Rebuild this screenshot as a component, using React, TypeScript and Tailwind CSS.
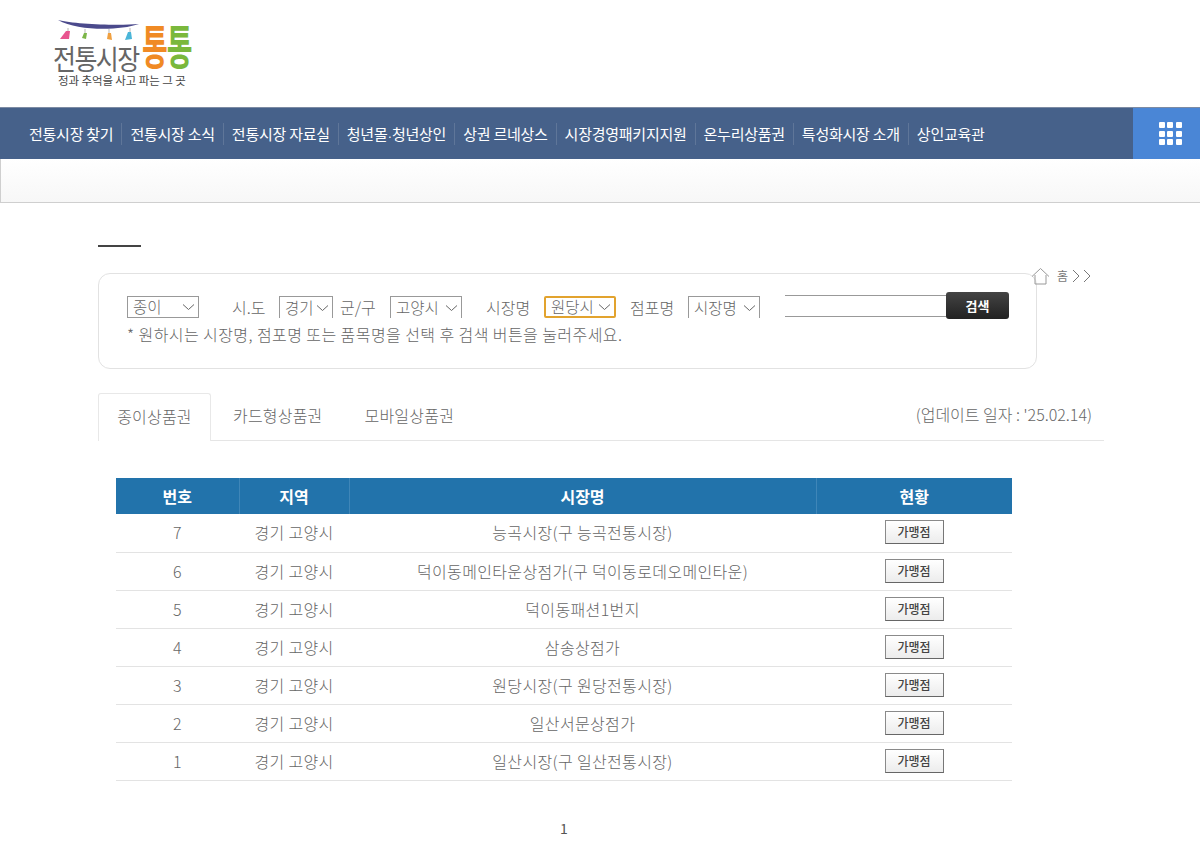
const font = "font-['Noto_Sans_CJK_KR','Noto_Sans',sans-serif]";

const menus = [
  "전통시장 찾기",
  "전통시장 소식",
  "전통시장 자료실",
  "청년몰·청년상인",
  "상권 르네상스",
  "시장경영패키지지원",
  "온누리상품권",
  "특성화시장 소개",
  "상인교육관",
];

const rows = [
  { no: 7, name: "능곡시장(구 능곡전통시장)" },
  { no: 6, name: "덕이동메인타운상점가(구 덕이동로데오메인타운)" },
  { no: 5, name: "덕이동패션1번지" },
  { no: 4, name: "삼송상점가" },
  { no: 3, name: "원당시장(구 원당전통시장)" },
  { no: 2, name: "일산서문상점가" },
  { no: 1, name: "일산시장(구 일산전통시장)" },
];

function Chevron() {
  return (
    <svg width="13" height="8" viewBox="0 0 13 8" fill="none" className="shrink-0">
      <path d="M1 1.500 6.500 6.500 12 1.500" stroke="#666" strokeWidth="1" />
    </svg>
  );
}

function Logo() {
  return (
    <div className="relative h-[107px] w-[300px]">
      <svg width="90" height="24" viewBox="0 0 90 24" className="absolute left-[56px] top-[19px]" fill="none">
        <path d="M2 1C18 5 60 7 83 5 62 12 22 12 2 1Z" fill="#4b4a8c" />
        <path d="M12 9v4M29 10v4M53 10v4M74 9v4" stroke="#999" strokeWidth="0.7" />
        <path d="M10 12 14 12 13 20 4 20Z" fill="#e8558f" />
        <path d="M28 14 31 14 30 20 26 19Z" fill="#7cb548" />
        <path d="M52 14 55 14 56 21 51 20Z" fill="#f0a040" />
        <path d="M72 13 75 13 76 20 69 21Z" fill="#4ab5d8" />
      </svg>
      <div className="absolute left-[53px] top-[43px] origin-top scale-y-[1.12] text-[25px] leading-[26px] tracking-[-1.6px] text-[#666666]">
        전통시장
      </div>
      <div className="absolute left-[142px] top-[17px] flex origin-top scale-y-[1.68] text-[28px] leading-[32px] font-bold tracking-[-1px]">
        <span className="text-[#f08a24]">통</span>
        <span className="text-[#7ab83c]">통</span>
      </div>
      <div className="absolute left-[58px] top-[73px] text-[11.5px] leading-[14px] tracking-[-0.1px] text-[#444444]">
        정과 추억을 사고 파는 그 곳
      </div>
    </div>
  );
}

function Select({ label, w, focus, closed }: { label: string; w: string; focus?: boolean; closed?: boolean }) {
  return (
    <div
      className={`flex h-[22px] shrink-0 items-center justify-between pl-[5px] pr-[3px] text-[15.5px] font-light text-[#666666] ${w} ${
        focus
          ? "rounded-[2px] border-2 border-[#e2a32e]"
          : closed
            ? "border border-[#999999]"
            : "border border-b-0 border-[#999999]"
      }`}
    >
      <span>{label}</span>
      <Chevron />
    </div>
  );
}

export default function App() {
  return (
    <div className={`${font} min-h-[867px] w-[1200px] overflow-hidden bg-white text-[#666666]`}>
      <Logo />

      <nav className="flex h-[52px] items-center justify-between border-t border-[#7d8ba3] bg-[#46618a]">
        <ul className="flex pl-[21px] text-[15px] tracking-[-0.25px] whitespace-nowrap text-white">
          {menus.map((m, i) => (
            <li key={m} className={`h-[22px] px-[8px] leading-[22px] ${i > 0 ? "border-l border-[#5f7699]" : ""}`}>
              {i === 3 ? (
                <>
                  청년몰<span className="text-[8px] leading-none font-bold">·</span>청년상인
                </>
              ) : (
                m
              )}
            </li>
          ))}
        </ul>
        <div className="grid h-full w-[67px] place-items-center bg-[#4a86d6] pl-[7px]">
          <div className="grid grid-cols-3 gap-[2.5px]">
            {Array.from({ length: 9 }).map((_, i) => (
              <span key={i} className="h-[6px] w-[6px] rounded-[1px] bg-white" />
            ))}
          </div>
        </div>
      </nav>

      <div className="h-[44px] border-b border-l border-[#cfcfcf] bg-gradient-to-b from-white to-[#f7f7f7]" />

      <main className="relative pl-[98px]">
        <div className="mt-[42px] h-[2px] w-[43px] bg-[#444444]" />

        <div className="absolute left-[1031px] top-[22px] flex items-center gap-[7px] text-[12px] text-[#777777]">
          <svg width="19" height="18" viewBox="0 0 19 18" fill="none" stroke="#999" strokeWidth="1">
            <path d="M1 9.500 9.500 1.500 18 9.500" />
            <path d="M4 8v9h11V8" />
          </svg>
          <span>홈</span>
          <svg width="20" height="14" viewBox="0 0 20 14" fill="none" stroke="#777" strokeWidth="1" className="-ml-[3px]">
            <path d="M1 1l6 6-6 6M12 1l6 6-6 6" />
          </svg>
        </div>

        <section className="mt-[26px] h-[96px] w-[939px] rounded-[12px] border border-[#e2e2e2] pl-[28px] pt-[21px]">
          <div className="flex h-[24px] items-center text-[16px] font-light whitespace-nowrap text-[#666666]">
            <Select label="종이" w="w-[72px]" closed />
            <span className="ml-[33px] w-[47px] shrink-0">시.도</span>
            <Select label="경기" w="w-[54px]" />
            <span className="ml-[7px] w-[36px] shrink-0">군/구</span>
            <span className="w-[14px] shrink-0" />
            <Select label="고양시" w="w-[72px]" />
            <span className="ml-[24px] w-[43px] shrink-0">시장명</span>
            <span className="w-[15px] shrink-0" />
            <Select label="원당시" w="w-[72px]" focus />
            <span className="ml-[14px] w-[44px] shrink-0">점포명</span>
            <span className="w-[14px] shrink-0" />
            <Select label="시장명" w="w-[72px]" />
            <div className="mb-[3px] ml-[25px] h-[22px] w-[161px] shrink-0 border-y border-[#999999]" />
            <button className="mb-[3px] h-[27px] w-[63px] shrink-0 rounded-[3px] bg-gradient-to-b from-[#444444] to-[#222222] text-[13px] font-bold text-white">
              검색
            </button>
          </div>
          <p className="mt-[4px] text-[16px] leading-[22px] font-light tracking-[0.43px] whitespace-nowrap text-[#666666]">
            * 원하시는 시장명, 점포명 또는 품목명을 선택 후 검색 버튼을 눌러주세요.
          </p>
        </section>

        <div className="mt-[24px] flex h-[48px] w-[1006px] items-stretch border-b border-[#e5e5e5] text-[16px] font-light tracking-[0.2px] text-[#666666]">
          <div className="-mb-px flex w-[113px] items-center justify-center rounded-t-[3px] border border-b-0 border-[#e8e8e8] bg-white pb-[3px]">
            종이상품권
          </div>
          <div className="ml-[22px] flex items-center pb-[3px]">카드형상품권</div>
          <div className="ml-[42px] flex items-center pb-[3px]">모바일상품권</div>
          <div className="ml-auto flex items-center pr-[12px] pb-[5px] tracking-[0px]">(업데이트 일자 : '25.02.14)</div>
        </div>

        <table className="mt-[37px] ml-[18px] w-[896px] table-fixed border-collapse text-center text-[16px] font-light tracking-[0.35px] text-[#666666]">
          <colgroup>
            <col className="w-[123px]" />
            <col className="w-[110px]" />
            <col className="w-[467px]" />
            <col className="w-[196px]" />
          </colgroup>
          <thead>
            <tr className="h-[36px] bg-[#2273ab] text-[16px] font-bold tracking-normal text-white">
              <th className="border-r border-[#3f86b8] pb-[1px]">번호</th>
              <th className="border-r border-[#3f86b8] pb-[1px]">지역</th>
              <th className="border-r border-[#3f86b8] pb-[1px]">시장명</th>
              <th className="pb-[1px]">현황</th>
            </tr>
          </thead>
          <tbody>
            {rows.map((r) => (
              <tr key={r.no} className="h-[38px] border-b border-[#e3e3e3]">
                <td className="pb-[1px]">{r.no}</td>
                <td className="pb-[1px]">경기 고양시</td>
                <td className="pb-[1px]">{r.name}</td>
                <td className="pb-[3px]">
                  <button className="h-[24px] w-[59px] border border-[#8a8a8a] border-r-[#777777] border-b-[#666666] bg-gradient-to-b from-white to-[#ececec] text-[12px] font-medium tracking-normal text-[#444444]">
                    가맹점
                  </button>
                </td>
              </tr>
            ))}
          </tbody>
        </table>

        <div className="mt-[37px] w-[932px] text-center text-[14px] leading-[20px] text-[#555555]">1</div>
      </main>
    </div>
  );
}
